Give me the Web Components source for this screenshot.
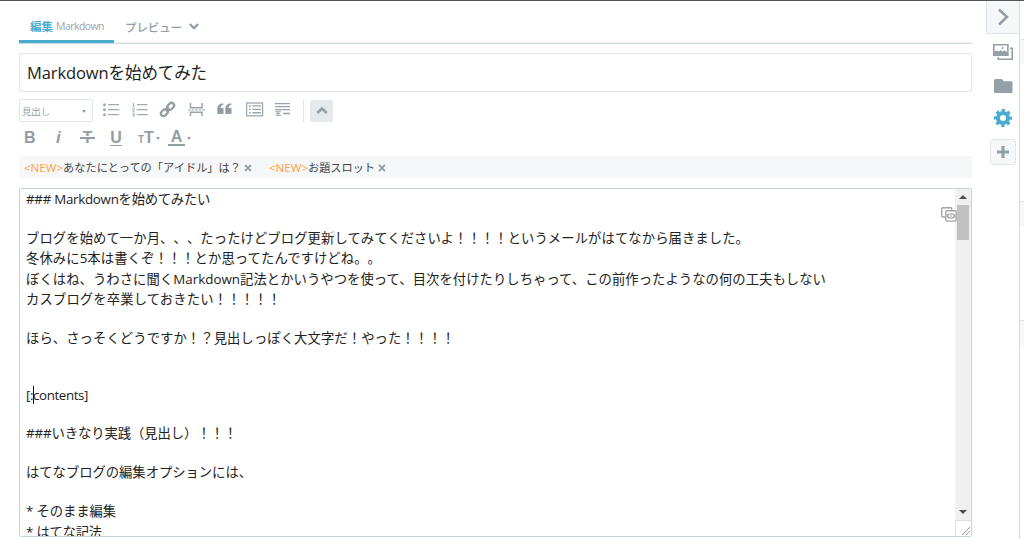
<!DOCTYPE html>
<html lang="ja">
<head>
<meta charset="utf-8">
<title>Markdownを始めてみた</title>
<style>
    html, body { margin: 0; height: 539px; overflow: hidden; background: #fff; }
    body { font-family: "Open Sans", "Noto Sans CJK JP", sans-serif; color: #222; text-spacing-trim: space-all; }
</style>
</head>
<body>
<blog-editor></blog-editor>

<script>
const ICONS = {
    ul: '<g fill="#a0abb1"><circle cx="1.500" cy="2.700" r="1.500"/><circle cx="1.500" cy="7.700" r="1.500"/><circle cx="1.500" cy="12.700" r="1.500"/><path d="M5 2h11v1.300H5zM5 7h11v1.300H5zM5 12h11v1.300H5z"/></g>',
    ol: '<path fill="#a0abb1" d="M5 2h10.500v1.300H5zM5 7h10.500v1.300H5zM5 12h10.500v1.300H5z"/><path fill="none" stroke="#a0abb1" stroke-width=".8" d="M.5 1h1v3.400M.3 4.400h2.300M.3 6.200h2v1.600H.7v1.500h2.100M.3 11h2v3.200H.3M.8 12.600h1.500"/>',
    link: '<g fill="none" stroke="#929da4" stroke-width="2.200" transform="rotate(-45 7.500 7.500)"><rect x="-.8" y="4.900" width="7.600" height="5.200" rx="2.600"/><rect x="8.200" y="4.900" width="7.600" height="5.200" rx="2.600"/><path d="M5 7.500h5" stroke-width="1.800"/></g>',
    page: '<path fill="none" stroke="#98a3aa" stroke-width="1.500" d="M2.500 1v4.700h11.500V1M2.500 14v-3.700h11.500V14"/><path stroke="#98a3aa" stroke-width="1.200" stroke-dasharray="2.600 1" d="M0 8h17"/>',
    quote: '<path fill="#929da4" d="M6.300 1.200v1.600C4.500 3.200 3.800 4.200 3.700 6H6.500v6H.3V7.200C.3 3.600 2.200 1.500 6.300 1.200zM14.300 1.200v1.600c-1.800.4-2.500 1.400-2.600 3.200h2.800v6H8.300V7.200c0-3.600 1.900-5.700 6-6z"/>',
    toc: '<rect x=".6" y="1" width="16" height="12.800" fill="none" stroke="#98a3aa" stroke-width="1.200"/><path fill="#98a3aa" d="M3 3.300h1.800v1.400H3zM3 6.700h1.800v1.400H3zM3 10.100h1.800v1.400H3zM6.300 3.300H15v1.300H6.300zM6.300 6.700H15V8H6.300zM6.300 10.100H15v1.300H6.300z"/>',
    more: '<path fill="#98a3aa" d="M0 1h15v1.200H0zM0 4h15v1.200H0zM0 7h15v1.200H0zM8 10.700h7v1.500H8z"/><path fill="none" stroke="#98a3aa" stroke-width=".9" d="M0 9.800h6M3 8.600v4.600M1 11.500h4M.5 13.400h5.500"/>',
    up: '<path fill="none" stroke="#929da4" stroke-width="2.600" d="M3.300 10L8 5.500l4.700 4.500"/>',
    down: '<path fill="none" stroke="#929da4" stroke-width="2.400" d="M3.800 5L8 9l4.200-4"/>',
    right: '<path fill="none" stroke="#929da4" stroke-width="2.500" d="M4 .5L12 8l-8 7.500"/>',
    images: '<path fill="#94a0a7" d="M17 3.500h3V16H4.500v-3h1.600v1.500h12.300V5.100H17z"/><path fill="#94a0a7" fill-rule="evenodd" d="M0 0h15.700v12H0zM1.600 1.600v6l2-1.200 2.200 1.200 1.800-1.500 2 1.400 1.700-1 2.800 1.200V1.600z"/><circle cx="9.500" cy="4" r="1" fill="#94a0a7"/>',
    folder: '<path fill="#94a0a7" d="M1.500 0h6.300l2 2.200H17q1.500 0 1.500 1.300V14H0V1.500Q0 0 1.500 0z"/>',
    gear: '<g fill="none" stroke="#4aabd0"><circle cx="9" cy="9" r="5" stroke-width="4"/><circle cx="9" cy="9" r="7.700" stroke-width="2.600" stroke-dasharray="3.300 2.747" stroke-dashoffset="1.650"/></g>',
    plus: '<path fill="none" stroke="#94a0a7" stroke-width="3.200" d="M6 0v12M0 6h12"/>',
    close: '<path fill="none" stroke="#98a3aa" stroke-width="1.900" d="M1 1l6 6M7 1L1 7"/>',
    copy: '<path fill="none" stroke="#a5a5a5" stroke-width="1.400" d="M4 10H1.700Q.7 10 .7 9V1.700q0-1 1-1h8q1 0 1 1V3"/><rect x="4.800" y="3.800" width="10.300" height="10.300" rx="1" fill="#fff" stroke="#a5a5a5" stroke-width="1.400"/><ellipse cx="10" cy="9" rx="3.500" ry="2.100" fill="none" stroke="#a5a5a5" stroke-width="1.400"/><circle cx="10" cy="9" r=".8" fill="#a5a5a5"/>'
};

// <ui-icon name="" w="" h=""> 
class UiIcon extends HTMLElement {
    connectedCallback() {
        const w = this.getAttribute('w') || 16;
        const h = this.getAttribute('h') || 16;
        this.attachShadow({mode: 'open'}).innerHTML = `
            <style>
                :host { display: block; flex: none; width: ${w}px; height: ${h}px; }
                svg { display: block; overflow: visible; }
            </style>
            <svg width="${w}" height="${h}" viewBox="0 0 ${w} ${h}">${ICONS[this.getAttribute('name')]}</svg>`;
    }
}
customElements.define('ui-icon', UiIcon);

// One run of text, spaced so that it takes up "width" pixels
class TextRun extends HTMLElement {
    connectedCallback() {
        this.attachShadow({mode: 'open'}).innerHTML = `
            <style>
                :host { display: block; flex: none; }
                span { display: block; width: max-content; white-space: pre; }
            </style>
            <span><slot></slot></span>`;
        const span = this.shadowRoot.querySelector('span');
        const width = Number(this.getAttribute('width'));
        if (width) {
            const gap = (width - span.getBoundingClientRect().width) / this.textContent.length;
            this.style.letterSpacing = gap + 'px';
            this.style.width = width + 'px';
        }
    }
}
customElements.define('text-run', TextRun);

class EditorTabs extends HTMLElement {
    connectedCallback() {
        this.attachShadow({mode: 'open'}).innerHTML = `
            <style>
                :host { display: flex; height: 31px; margin-top: 11px; border-bottom: 1px solid #cfdadd; box-shadow: 0 -1px #f0f3f4 inset; }
                div { display: flex; align-items: center; height: 29px; box-sizing: border-box; color: #929da4; font-size: 11.5px; }
                .on { width: 95px; height: 31px; padding: 0 0 0 11px; border-bottom: 3px solid #4aabd0; gap: 3px; }
                .edit { color: #4aabd0; font-weight: 700; }
                .mode { color: #9ba4a9; font-size: 10.5px; }
                .off { padding-left: 11px; gap: 4px; }
                .preview { font-weight: 500; }
            </style>
            <div class="on"><text-run class="edit" width="23">編集</text-run><text-run class="mode" width="48">Markdown</text-run></div>
            <div class="off"><text-run class="preview" width="57">プレビュー</text-run><ui-icon name="down"></ui-icon></div>`;
    }
}
customElements.define('editor-tabs', EditorTabs);

class EditorToolbar extends HTMLElement {
    connectedCallback() {
        this.attachShadow({mode: 'open'}).innerHTML = `
            <style>
                :host { display: block; height: 57px; margin-top: 7px; color: #929da4; }
                .row { display: grid; align-items: center; height: 23px; }
                .one { grid-template-columns: 84px 29px 28px 28px 29px 29px 29px 28px 7px 23px; }
                .one > ui-icon { margin-bottom: 1px; }
                .two { grid-template-columns: 31px 30px 30px 28px 30px 30px; height: 32px; padding-left: 5px; }
                .select { display: flex; align-items: center; justify-content: space-between; box-sizing: border-box; width: 74px; height: 23px; padding: 1px 6px 0 2px; border: 1px solid #dfe6e8; border-radius: 2px; font-size: 9.5px; }
                .arrow { border: 2px solid transparent; border-top: 3px solid #929da4; border-bottom: 0; }
                .line { width: 1px; height: 22px; background: #dfe4e6; }
                .up { display: flex; align-items: center; justify-content: center; height: 22px; background: #e4e9ec; border-radius: 2px; }
                .g { display: flex; align-items: center; font: bold 16px/18px "Liberation Sans", sans-serif; }
                .g .arrow { margin-left: 2px; }
                i { font-size: 17px; padding-left: 1px; }
                .strike { position: relative; width: 15px; justify-content: center; }
                .strike::after { content: ""; position: absolute; left: 0; top: 8px; width: 15px; height: 2px; background: #929da4; box-shadow: 0 -1px #fff; }
                .u { width: 12px; justify-content: center; line-height: 14px; border-bottom: 1px solid #929da4; }
                .a { width: 17px; justify-content: center; line-height: 14px; border-bottom: 2px solid #929da4; }
                small { font-size: 10px; align-self: flex-end; line-height: 15px; }
            </style>
            <div class="row one">
                <div class="select"><text-run width="28">見出し</text-run><span class="arrow"></span></div>
                <ui-icon name="ul"></ui-icon>
                <ui-icon name="ol"></ui-icon>
                <ui-icon name="link"></ui-icon>
                <ui-icon name="page" w="17"></ui-icon>
                <ui-icon name="quote"></ui-icon>
                <ui-icon name="toc" w="18"></ui-icon>
                <ui-icon name="more"></ui-icon>
                <span class="line"></span>
                <span class="up"><ui-icon name="up"></ui-icon></span>
            </div>
            <div class="row two">
                <span class="g">B</span>
                <span class="g"><i>i</i></span>
                <span class="g strike" style="margin-left:-5px">T</span>
                <span class="g u" style="margin-left:-5px">U</span>
                <span class="g" style="margin-left:-5px"><small>T</small>T<span class="arrow"></span></span>
                <span class="g" style="margin-left:-5px"><span class="a" style="text-align:center">A</span><span class="arrow"></span></span>
            </div>`;
    }
}
customElements.define('editor-toolbar', EditorToolbar);

class TopicTag extends HTMLElement {
    connectedCallback() {
        this.attachShadow({mode: 'open'}).innerHTML = `
            <style>
                :host { display: flex; align-items: center; font-size: 11.2px; color: #444; }
                .new { color: #ff9f3d; font-size: 11.5px; }
                ui-icon { margin: 2px 0 0 3px; }
            </style>
            <text-run class="new" width="39">&lt;NEW&gt;</text-run>
            <text-run width="${this.getAttribute('width')}">${this.getAttribute('label')}</text-run>
            <ui-icon name="close" w="8" h="8"></ui-icon>`;
    }
}
customElements.define('topic-tag', TopicTag);

// [text, width]; a row with only half-width text is lower than a Japanese one
const LINES = [
    ['### Markdownを始めてみたい', 184],
    [''],
    ['ブログを始めて一か月、、、たったけどブログ更新してみてくださいよ！！！！というメールがはてなから届きました。', 723],
    ['冬休みに5本は書くぞ！！！とか思ってたんですけどね。。', 355],
    ['ぼくはね、うわさに聞くMarkdown記法とかいうやつを使って、目次を付けたりしちゃって、この前作ったようなの何の工夫もしない', 800],
    ['カスブログを卒業しておきたい！！！！！', 255],
    [''],
    ['ほら、さっそくどうですか！？見出しっぽく大文字だ！やった！！！！', 429],
    [''],
    [''],
    ['[:contents]', 62],
    [''],
    ['###いきなり実践（見出し）！！！', 211],
    [''],
    ['はてなブログの編集オプションには、', 226],
    [''],
    ['* そのまま編集', 90],
    ['* はてな記法', 76]
];

class MarkdownArea extends HTMLElement {
    connectedCallback() {
        const rows = LINES.map(([text, width]) => {
            const low = !/[^\x00-\x7f]/.test(text);
            const caret = text[0] === '[' ? '<i></i>' : '';
            return `<div class="${low ? 'low' : ''}">${text ? `<text-run width="${width}">${text}</text-run>` : ''}${caret}</div>`;
        }).join('');
        this.attachShadow({mode: 'open'}).innerHTML = `
            <style>
                :host { position: relative; display: flex; box-sizing: border-box; height: 349px; margin-top: 10px; border: 1px solid #c7d4d9; border-radius: 2px; overflow: hidden; font-size: 13.33px; color: #222; }
                .text { flex: 1; padding-left: 6px; }
                .text div { position: relative; height: 20.35px; line-height: 20.35px; }
                .text .low { height: 18.7px; line-height: 18.7px; }
                .text i { position: absolute; left: 7px; top: 0; width: 1px; height: 18px; background: #111; }
                .bar { display: flex; flex-direction: column; align-items: center; width: 16px; background: #f0f0f0; }
                .arrow { border: 4px solid transparent; }
                .top { margin: 6px 0 10px; border-bottom-color: #505050; border-top: 0; }
                .thumb { width: 12px; height: 35px; margin-top: -4px; background: #c1c1c1; }
                .bottom { margin: auto 0 6px; border-top-color: #505050; border-bottom: 0; }
                .grip { width: 16px; height: 16px; background: #fff; border-top: 1px solid #ddd; border-left: 1px solid #ddd; box-sizing: border-box; }
                .copy { position: absolute; left: 921px; top: 18px; }
                svg { display: block; }
            </style>
            <div class="text">${rows}</div>
            <div class="bar">
                <span class="arrow top"></span><div class="thumb"></div><span class="arrow bottom"></span>
                <div class="grip"><svg width="15" height="15"><path stroke="#999" d="M6 14l8-8M10 14l4-4"/></svg></div>
            </div>
            <ui-icon class="copy" name="copy"></ui-icon>`;
    }
}
customElements.define('markdown-area', MarkdownArea);

class SideBar extends HTMLElement {
    connectedCallback() {
        this.attachShadow({mode: 'open'}).innerHTML = `
            <style>
                :host { display: flex; width: 38px; height: 538px; }
                .tools { display: flex; flex-direction: column; align-items: center; width: 33px; border-right: 1px solid #d3dde2; }
                .open { display: flex; align-items: center; justify-content: center; box-sizing: border-box; width: 33px; height: 33px; border: 1px solid #dbe4e7; border-top: 0; border-right: 0; background: #f5f7f9; }
                .add { display: flex; align-items: center; justify-content: center; box-sizing: border-box; width: 26px; height: 26px; margin-top: 12px; border: 1px solid #e2e6e9; border-radius: 3px; background: #f5f7f9; }
                .panel { width: 4px; padding-top: 38px; }
                .panel div { height: 24px; border-top: 1px solid #dce3e6; background: #f5f7f9; }
                .panel div + div { margin-top: 137px; }
                .panel div + div + div { margin-top: 94px; }
            </style>
            <div class="tools">
                <div class="open"><ui-icon name="right"></ui-icon></div>
                <ui-icon name="images" w="20" style="margin-top:10px"></ui-icon>
                <ui-icon name="folder" w="18" h="14" style="margin-top:19px"></ui-icon>
                <ui-icon name="gear" w="18" h="18" style="margin-top:16px"></ui-icon>
                <div class="add"><ui-icon name="plus" w="12" h="12"></ui-icon></div>
            </div>
            <div class="panel"><div></div><div></div><div></div></div>`;
    }
}
customElements.define('side-bar', SideBar);

class BlogEditor extends HTMLElement {
    connectedCallback() {
        this.attachShadow({mode: 'open'}).innerHTML = `
            <style>
                :host { display: flex; box-sizing: border-box; height: 539px; border-top: 1px solid #55545a; }
                main { width: 953px; margin: 0 14px 0 19px; }
                .title { display: flex; align-items: center; box-sizing: border-box; height: 39px; margin-top: 9px; padding: 0 0 2px 7px; border: 1px solid #dfe6e8; border-radius: 2px; font-size: 16.5px; }
                .topics { display: flex; gap: 17px; height: 22px; padding-left: 5px; background: #f5f7f9; }
            </style>
            <main>
                <editor-tabs></editor-tabs>
                <div class="title"><text-run width="180">Markdownを始めてみた</text-run></div>
                <editor-toolbar></editor-toolbar>
                <div class="topics">
                    <topic-tag label="あなたにとっての「アイドル」は？" width="178"></topic-tag>
                    <topic-tag label="お題スロット" width="67"></topic-tag>
                </div>
                <markdown-area></markdown-area>
            </main>
            <side-bar></side-bar>`;
    }
}
customElements.define('blog-editor', BlogEditor);
</script>
</body>
</html>
